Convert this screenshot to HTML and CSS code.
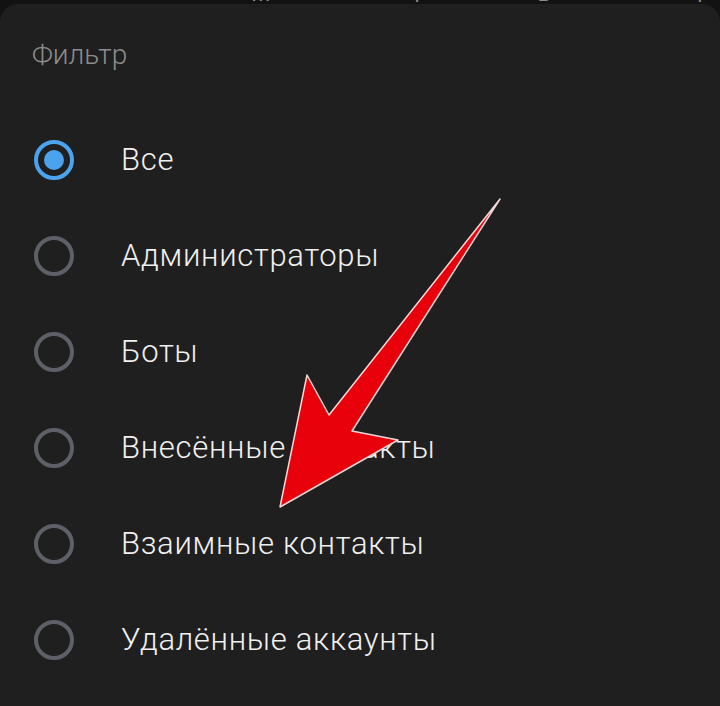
FILE: index.html
```html
<!DOCTYPE html>
<html lang="ru">
<head>
    <meta charset="UTF-8">
    <meta name="viewport" content="width=device-width, initial-scale=1.0">
    <title>Фильтр</title>
    <link rel="stylesheet" href="styles.css">
</head>
<body>
    <div class="tabs">
        <span class="tab-icon">○</span>
        <span class="tab-m">М</span>
        <span class="tab-f">Ф</span>
        <span class="tab-v">В</span>
        <span class="tab-l">Ф</span>
    </div>
    <div class="sheet">
        <div class="title">Фильтр</div>
        <div class="options">
            <div class="option"><span class="radio checked"></span><span class="label">Все</span></div>
            <div class="option"><span class="radio"></span><span class="label">Администраторы</span></div>
            <div class="option"><span class="radio"></span><span class="label">Боты</span></div>
            <div class="option"><span class="radio"></span><span class="label">Внесённые контакты</span></div>
            <div class="option"><span class="radio"></span><span class="label">Взаимные контакты</span></div>
            <div class="option"><span class="radio"></span><span class="label">Удалённые аккаунты</span></div>
        </div>
    </div>
    <svg class="arrow" width="720" height="706" viewBox="0 0 720 706">
        <polygon points="500,199 352,431 398,440 280,507 307,375 329,415" fill="#e8000b" stroke="#f3d6d6" stroke-width="1.5" stroke-linejoin="round"/>
    </svg>
</body>
</html>
```

FILE: styles.css
```css
body {
    margin: 0;
    padding: 0;
    background: #121212;
    font-family: Roboto, "Noto Sans", sans-serif;
    width: 720px;
    height: 706px;
    overflow: hidden;
    position: relative;
}
.tabs {
    height: 4px;
    overflow: hidden;
    display: flex;
    align-items: flex-start;
    color: #8a8a8a;
    font-size: 22px;
    line-height: 22px;
}
.tabs span {
    margin-top: -17px;
}
.tab-icon {
    color: #4aa3ec;
    margin-left: 46px;
}
.tab-m {
    margin-left: 192px;
}
.tab-f {
    margin-left: 138px;
}
.tab-v {
    margin-left: 112px;
}
.tab-l {
    margin-left: 140px;
}
.sheet {
    background: #1f1f1f;
    border-radius: 18px 18px 0 0;
    height: 702px;
}
.title {
    color: #8c8c8c;
    font-size: 28px;
    font-weight: 300;
    line-height: 32px;
    padding: 35px 0 0 32px;
    height: 73px;
}
.option {
    height: 96px;
    display: flex;
    align-items: center;
    padding-left: 34px;
}
.radio {
    width: 32px;
    height: 32px;
    border: 4px solid #5d6167;
    border-radius: 50%;
    display: flex;
    align-items: center;
    justify-content: center;
    flex-shrink: 0;
}
.radio.checked {
    border-color: #4aa3ec;
}
.radio.checked::after {
    content: "";
    width: 20px;
    height: 20px;
    border-radius: 50%;
    background: #4aa3ec;
}
.label {
    margin-left: 47px;
    color: #f0f0f0;
    font-size: 31px;
    font-weight: 300;
    letter-spacing: 0.7px;
    line-height: 36px;
}
.arrow {
    position: absolute;
    left: 0;
    top: 0;
    pointer-events: none;
}
```
